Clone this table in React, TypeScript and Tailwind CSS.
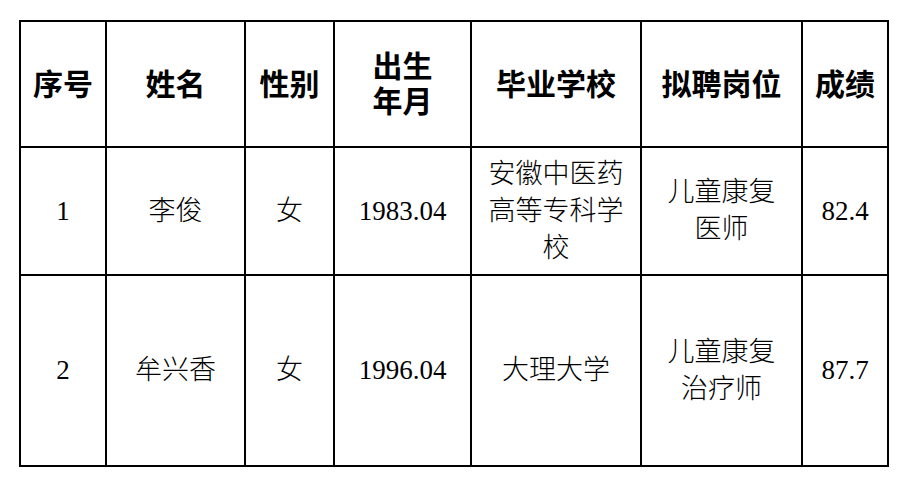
const headers = ['序号', '姓名', '性别', '出生\n年月', '毕业学校', '拟聘岗位', '成绩'];

const rows = [
  ['1', '李俊', '女', '1983.04', '安徽中医药\n高等专科学\n校', '儿童康复\n医师', '82.4'],
  ['2', '牟兴香', '女', '1996.04', '大理大学', '儿童康复\n治疗师', '87.7'],
];

function Lines({ text }: { text: string }) {
  return (
    <>
      {text.split('\n').map((l, i) => (
        <div key={i}>{l}</div>
      ))}
    </>
  );
}

export default function App() {
  return (
    <div className="min-h-[488px] bg-white pt-[20px] pl-[19px]">
      <div className="grid w-fit grid-cols-[86px_139px_89px_137px_170px_161px_86px] grid-rows-[126px_128px_191px] border-l-2 border-t-2 border-black text-black">
        {headers.map((h) => (
          <div
            key={h}
            className="flex flex-col items-center justify-center border-b-2 border-r-2 border-black pb-[4px] text-center font-['Noto_Sans_CJK_SC',sans-serif] text-[30px] font-bold leading-[35px]"
          >
            <Lines text={h} />
          </div>
        ))}
        {rows.map((r) =>
          r.map((c, j) => (
            <div
              key={r[0] + j}
              className="flex flex-col items-center justify-center border-b-2 border-r-2 border-black text-center font-['Liberation_Serif','Noto_Sans_CJK_SC',serif] text-[27px] font-light leading-[37px]"
            >
              <Lines text={c} />
            </div>
          ))
        )}
      </div>
    </div>
  );
}
